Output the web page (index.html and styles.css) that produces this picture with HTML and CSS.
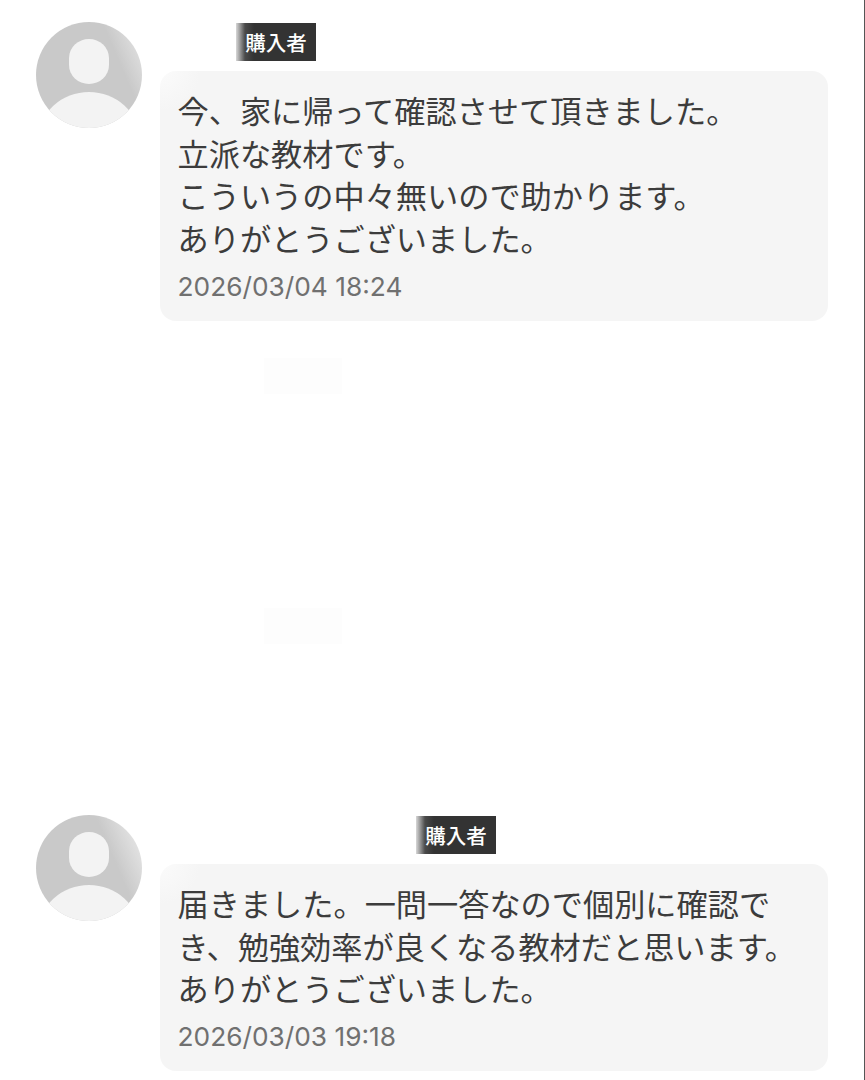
FILE: index.html
```html
<!DOCTYPE html>
<html lang="ja">

<head>
  <meta charset="UTF-8">
  <meta name="viewport" content="width=device-width, initial-scale=1.0">
  <title>レビュー</title>
  <link rel="stylesheet" href="styles.css">
</head>

<body>
  <div class="reviews">

    <div class="review">
      <svg class="avatar" viewBox="0 0 106 106">
        <defs>
          <linearGradient id="shine-1" x1="0.3" y1="0.6" x2="1" y2="0.3">
            <stop offset="0.7" stop-color="#c9c9c9"/>
            <stop offset="1" stop-color="#dedede"/>
          </linearGradient>
          <clipPath id="round-1"><circle cx="53" cy="53" r="53"/></clipPath>
        </defs>
        <circle cx="53" cy="53" r="53" fill="url(#shine-1)"/>
        <rect x="33" y="17" width="40" height="45" rx="20" ry="19" fill="#f3f3f3"/>
        <ellipse cx="53" cy="116" rx="50" ry="46" fill="#f3f3f3" clip-path="url(#round-1)"/>
      </svg>
      <div class="review-body">
        <div class="review-head">
          <span class="name name-short"></span>
          <span class="badge">購入者</span>
        </div>
        <div class="bubble">
          <p class="message">今、家に帰って確認させて頂きました。<br>立派な教材です。<br>こういうの中々無いので助かります。<br>ありがとうございました。</p>
          <p class="date">2026/03/04 18:24</p>
        </div>
      </div>
    </div>

    <!-- 名前と本文が消されているレビュー -->
    <div class="review review-faded review-faded-1">
      <div class="review-body">
        <span class="ghost-badge"></span>
      </div>
    </div>

    <div class="review review-faded review-faded-2">
      <div class="review-body">
        <span class="ghost-badge"></span>
      </div>
    </div>

    <div class="review">
      <svg class="avatar" viewBox="0 0 106 106">
        <defs>
          <linearGradient id="shine-2" x1="0.3" y1="0.6" x2="1" y2="0.3">
            <stop offset="0.62" stop-color="#c9c9c9"/>
            <stop offset="1" stop-color="#e4e4e4"/>
          </linearGradient>
          <clipPath id="round-2"><circle cx="53" cy="53" r="53"/></clipPath>
        </defs>
        <circle cx="53" cy="53" r="53" fill="url(#shine-2)"/>
        <rect x="33" y="17" width="40" height="45" rx="20" ry="19" fill="#f3f3f3"/>
        <ellipse cx="53" cy="116" rx="50" ry="46" fill="#f3f3f3" clip-path="url(#round-2)"/>
      </svg>
      <div class="review-body">
        <div class="review-head">
          <span class="name name-long"></span>
          <span class="badge">購入者</span>
        </div>
        <div class="bubble">
          <p class="message">届きました。一問一答なので個別に確認で<br>き、勉強効率が良くなる教材だと思います。<br>ありがとうございました。</p>
          <p class="date">2026/03/03 19:18</p>
        </div>
      </div>
    </div>

  </div>
</body>

</html>
```

FILE: styles.css
```css
* {
  box-sizing: border-box;
}

body {
  margin: 0;
  background-color: #fff;
  font-family: "Noto Sans CJK JP", "Liberation Sans", sans-serif;
}

p {
  margin: 0;
}

.reviews {
  height: 1080px;
  padding: 22px 36px 0 36px;
  border-right: 1px solid #555;
  overflow: hidden;
}

.review {
  display: flex;
  gap: 18px;
}

.avatar {
  width: 106px;
  height: 106px;
  flex-shrink: 0;
}

.review-body {
  flex: 1;
}

.review-head {
  display: flex;
  gap: 10px;
  margin-top: 1px;
  margin-bottom: 10px;
}

.name {
  height: 38px;
}

.name-short {
  width: 66px;
}

.name-long {
  width: 246px;
}

.badge {
  width: 80px;
  height: 38px;
  line-height: 38px;
  text-align: center;
  color: #fff;
  font-size: 20.5px;
  font-weight: 500;
  background: linear-gradient(90deg, #d8d8d8 0, #4a4a4a 9px, #333 18px);
}

.bubble {
  padding: 18px 18px 19px 17.5px;
  border-radius: 16px;
  background: radial-gradient(circle at 0 0, #fbfbfb 0, #f5f5f5 40px);
}

.message {
  font-size: 31.2px;
  line-height: 42.7px;
  font-weight: 400;
  color: #3c3c3c;
  white-space: nowrap;
}

.date {
  margin-top: 12px;
  font-family: Inter, "Liberation Sans", sans-serif;
  font-size: 26.3px;
  line-height: 30px;
  color: #707070;
}

.review-faded {
  height: 250px;
}

.review-faded-1 {
  margin-top: 37px;
  padding-left: 228px;
}

.review-faded-2 {
  height: 207px;
  padding-left: 228px;
}

.ghost-badge {
  display: block;
  width: 78px;
  height: 36px;
  background-color: #fdfdfd;
}
```
